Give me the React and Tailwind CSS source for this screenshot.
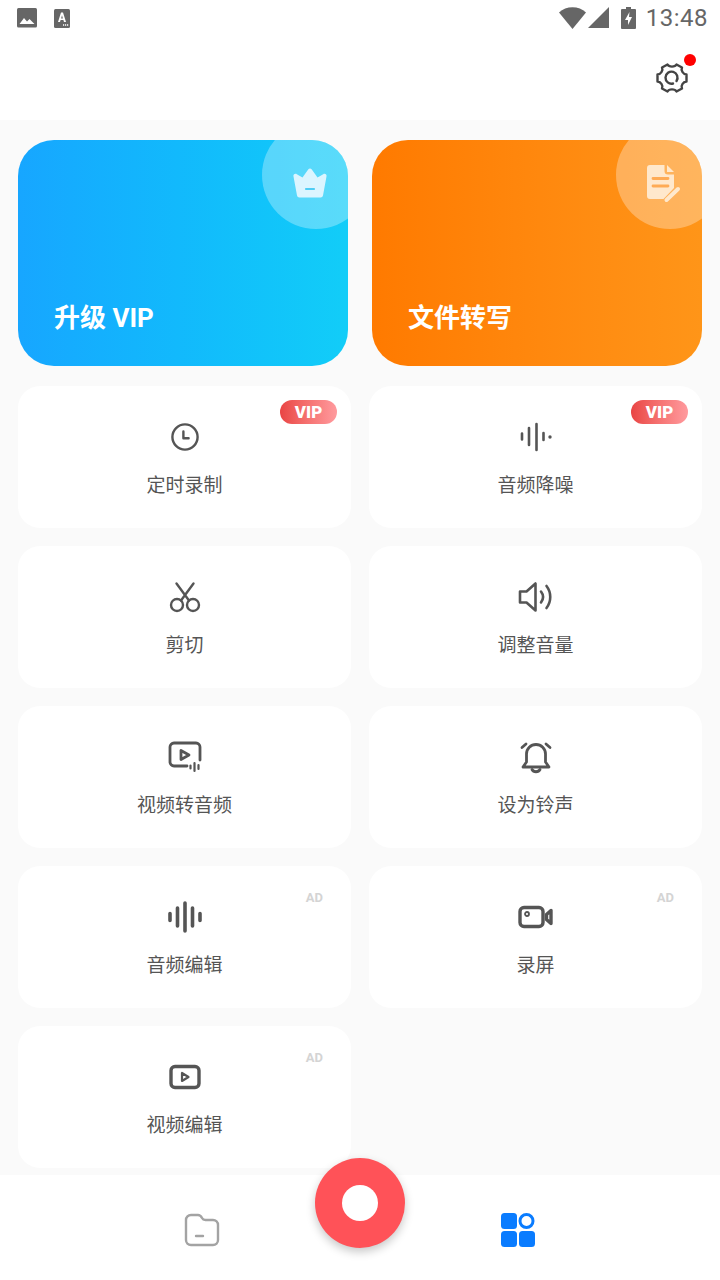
import React from 'react'

const ink = '#555555'

function Clock() {
  return (
    <svg width="30" height="30" viewBox="0 0 30 30" fill="none" stroke={ink} strokeWidth="2.4" strokeLinecap="round" strokeLinejoin="round">
      <circle cx="15" cy="15" r="12.6" />
      <path d="M13.4 9.5v6.8h5.2" />
    </svg>
  )
}

function Wave() {
  return (
    <svg width="34" height="30" viewBox="0 0 34 30" fill="none" stroke={ink} strokeLinecap="round">
      <path strokeWidth="2.6" d="M3 11.5v6M10 6v17M17.500 2v26M24.500 11v7" />
      <circle cx="31" cy="15" r="1.700" fill={ink} stroke="none" />
    </svg>
  )
}

function Scissors() {
  return (
    <svg width="32" height="32" viewBox="0 0 32 32" fill="none" stroke={ink} strokeWidth="2.4" strokeLinecap="round">
      <circle cx="8" cy="24" r="6" />
      <circle cx="24" cy="24" r="6" />
      <path d="M12 19.500 24.500 2.500M20 19.500 7.500 2.500" />
    </svg>
  )
}

function Speaker() {
  return (
    <svg width="36" height="32" viewBox="0 0 36 32" fill="none" stroke={ink} strokeWidth="2.6" strokeLinecap="round" strokeLinejoin="round">
      <path d="M2 10.500h6.500L17.500 2.500v27l-9-8H2z" />
      <path d="M23 10.500c2.500 3.300 2.500 7.700 0 11" />
      <path d="M28.500 5c5 6.500 5 15.500 0 22" />
    </svg>
  )
}

function VideoToAudio() {
  return (
    <svg width="34" height="32" viewBox="0 0 34 32" fill="none" stroke={ink} strokeWidth="2.800" strokeLinecap="round" strokeLinejoin="round">
      <path d="M19 25H6a4 4 0 0 1-4-4V6a4 4 0 0 1 4-4h22a4 4 0 0 1 4 4v13" />
      <path d="M13 9.500v9l8-4.500z" />
      <path strokeWidth="2.200" d="M22.500 24.500v3M26.500 22v8M30.500 24v4" />
    </svg>
  )
}

function Bell() {
  return (
    <svg width="34" height="34" viewBox="0 0 34 34" fill="none" stroke={ink} strokeWidth="2.800" strokeLinecap="round" strokeLinejoin="round">
      <path d="M4 27h26l-3.500-5V14a9.500 9.500 0 0 0-19 0v8z" />
      <path d="M13 29.500c1.500 3 6.500 3 8 0" />
      <path d="M3 7.500 7 4M31 7.500 27 4" />
    </svg>
  )
}

function AudioEdit() {
  return (
    <svg width="36" height="32" viewBox="0 0 36 32" fill="none" stroke={ink} strokeWidth="3.600" strokeLinecap="round">
      <path d="M3 12.500v7M10.500 7v18M18 2v28M25.500 7v18M33 12.500v7" />
    </svg>
  )
}

function ScreenRec() {
  return (
    <svg width="36" height="24" viewBox="0 0 36 24" fill="none" stroke={ink} strokeWidth="3.400" strokeLinecap="round" strokeLinejoin="round">
      <rect x="2" y="2.500" width="23" height="19" rx="4" />
      <circle cx="9" cy="9" r="2" strokeWidth="1.800" />
      <path d="M28.500 9.500 33 5.500v13l-4.500-4z" />
    </svg>
  )
}

function VideoEdit() {
  return (
    <svg width="32" height="26" viewBox="0 0 32 26" fill="none" stroke={ink} strokeWidth="3.400" strokeLinecap="round" strokeLinejoin="round">
      <rect x="2" y="2.500" width="28" height="21" rx="4" />
      <path strokeWidth="2.200" d="M13 9v8l6.500-4z" />
    </svg>
  )
}

function VipTag() {
  return (
    <div className="absolute right-[14px] top-[14px] flex h-6 w-[57px] items-center justify-center rounded-full bg-gradient-to-r from-[#e94444] to-[#ff9a9e] text-[17px] font-black leading-none text-white">
      VIP
    </div>
  )
}

function Tile({ icon, label, tag }) {
  return (
    <div className="relative flex h-[142px] flex-col items-center rounded-[22px] bg-white">
      {tag === 'vip' && <VipTag />}
      {tag === 'ad' && <div className="absolute right-[28px] top-[24px] text-[13px] font-bold leading-4 text-[#d4d4d4]">AD</div>}
      <div className="mt-[32px] flex h-[38px] items-center justify-center">{icon}</div>
      <div className="mt-[16px] text-[19px] leading-[28px] text-[#555555]">{label}</div>
    </div>
  )
}

function Promo({ title, className, icon, tx, ty }) {
  return (
    <div className={`relative h-[226px] w-[330px] overflow-hidden rounded-[36px] ${className}`}>
      <div className="absolute left-[244px] top-[-19px] flex h-[108px] w-[108px] items-center justify-center rounded-full bg-white/30" />
      <div className="absolute" style={{ left: tx, top: ty }}>{icon}</div>
      <div className="absolute left-[36px] top-[160px] text-[26px] font-bold leading-9 text-white">{title}</div>
    </div>
  )
}

export default function App() {
  return (
    <div className="relative flex h-[1280px] w-[720px] flex-col overflow-hidden bg-[#fafafa] font-['Roboto','Noto_Sans_CJK_SC',sans-serif]">
      <div className="h-[120px] bg-white">
        <div className="flex h-9 items-center justify-between pl-[17px] pr-[12px]">
          <div className="flex items-center gap-[17px]">
            <svg width="20" height="20" viewBox="0 0 20 20">
              <rect width="20" height="19.500" y="0" rx="1.500" fill="#666" />
              <path d="M2.500 16 7 10l3 3.500 2.500-2.500 5 5z" fill="#fff" />
            </svg>
            <svg width="16" height="19" viewBox="0 0 16 19">
              <rect width="16" height="19" rx="1.500" fill="#666" />
              <path d="M4 13 7 3.500h2L12 13h-2l-.6-2H6.600L6 13zM7.100 9.400h1.800L8 6.200z" fill="#fff" />
              <path d="M9 16h1.200M11 16h1.200M13 16h1.200" stroke="#fff" strokeWidth="1.400" />
            </svg>
          </div>
          <div className="flex items-center">
            <svg width="27" height="22" viewBox="0 0 27 22" className="mr-[1px]">
              <path d="M0 5.500C7-1.500 20-1.500 27 5.500L13.500 22z" fill="#666" />
            </svg>
            <svg width="22" height="22" viewBox="0 0 22 22" className="ml-[1px]">
              <path d="M0 21 21 0v21z" fill="#666" />
            </svg>
            <svg width="15" height="22" viewBox="0 0 15 22" className="ml-[11px]">
              <path d="M5 0h5v2h4a1 1 0 0 1 1 1v18a1 1 0 0 1-1 1H1a1 1 0 0 1-1-1V3a1 1 0 0 1 1-1h4z" fill="#666" />
              <path d="M8.500 5 4 13h3v5l4-8H8z" fill="#fff" />
            </svg>
            <div className="ml-[10px] text-[24px] font-normal leading-none tracking-[0.5px] text-[#666666]">13:48</div>
          </div>
        </div>
        <div className="flex justify-end pr-[32px] pt-[25px]">
          <div className="relative">
            <svg width="32" height="34" viewBox="0 0 32 34" fill="none" stroke="#444" strokeWidth="2.400" strokeLinecap="round" strokeLinejoin="round">
              <path d="M11.500 3.500c1.500 2.800 7.500 2.800 9 0l5.500 3c-1.500 3 1.500 7 4.500 7v7c-3 0-6 4-4.500 7l-5.500 3c-1.500-2.800-7.500-2.800-9 0l-5.500-3c1.500-3-1.500-7-4.500-7v-7c3 0 6-4 4.500-7z" />
              <path d="M20.500 20a6 6 0 1 0-3.500 2.500" />
            </svg>
            <div className="absolute right-[-8px] top-[-7px] h-3 w-3 rounded-full bg-[#ff0000]" />
          </div>
        </div>
      </div>

      <div className="flex-1 px-[18px] pt-[20px]">
        <div className="flex justify-between">
          <Promo
            title="升级 VIP"
            className="bg-gradient-to-r from-[#17a6ff] to-[#12cdf8]"
            tx={274}
            ty={28}
            icon={
              <svg width="36" height="32" viewBox="0 0 36 32">
                <path d="M1.500 8.500C1 6.500 3 5.200 4.800 6.200L10.500 9.500l5.700-8c.9-1.200 2.700-1.200 3.600 0l5.700 8 5.700-3.300c1.800-1 3.800.3 3.300 2.300L31 27.500c-.3 1.200-1.200 2-2.400 2H7.400c-1.200 0-2.100-.8-2.400-2z" fill="#dcf5ff" />
                <path d="M14 21h8" stroke="#4fcdf5" strokeWidth="2.200" strokeLinecap="round" />
              </svg>
            }
          />
          <Promo
            title="文件转写"
            className="bg-gradient-to-r from-[#ff7a00] to-[#ff9518]"
            tx={275}
            ty={25}
            icon={
              <svg width="34" height="38" viewBox="0 0 34 38">
                <path d="M0 3a3 3 0 0 1 3-3h14.500v6a3.500 3.500 0 0 0 3.500 3.500h6v13.500L16.500 34H3a3 3 0 0 1-3-3z" fill="#ffe8cc" />
                <path d="M20 0l7 7h-7z" fill="#ffe8cc" />
                <path d="M6 13.500h15M6 21h15" stroke="#ffab55" strokeWidth="2.800" strokeLinecap="round" />
                <path d="M19.500 35 31 24" stroke="#ffe8cc" strokeWidth="4" strokeLinecap="round" />
              </svg>
            }
          />
        </div>

        <div className="mt-[20px] grid grid-cols-2 gap-[18px]">
          <Tile icon={<Clock />} label="定时录制" tag="vip" />
          <Tile icon={<Wave />} label="音频降噪" tag="vip" />
          <Tile icon={<Scissors />} label="剪切" />
          <Tile icon={<Speaker />} label="调整音量" />
          <Tile icon={<VideoToAudio />} label="视频转音频" />
          <Tile icon={<Bell />} label="设为铃声" />
          <Tile icon={<AudioEdit />} label="音频编辑" tag="ad" />
          <Tile icon={<ScreenRec />} label="录屏" tag="ad" />
          <Tile icon={<VideoEdit />} label="视频编辑" tag="ad" />
        </div>
      </div>

      <div className="flex h-[105px] items-center bg-white pt-[5px]">
        <div className="flex w-[405px] justify-end">
          <svg width="36" height="34" viewBox="0 0 36 34" fill="none" stroke="#a3a3a3" strokeWidth="2.400" strokeLinecap="round" strokeLinejoin="round" className="mr-[185px]">
            <path d="M2 7a5 5 0 0 1 5-5h7c2 0 3 1 4 3s1.500 2 3.500 2H29a5 5 0 0 1 5 5v15a5 5 0 0 1-5 5H7a5 5 0 0 1-5-5z" />
            <path d="M12 23h7" />
          </svg>
        </div>
        <svg width="34" height="34" viewBox="0 0 34 34" className="ml-[96px]">
          <rect x="0" y="0" width="16" height="16" rx="3.500" fill="#0a7cff" />
          <circle cx="25.500" cy="8" r="6.500" fill="none" stroke="#0a7cff" strokeWidth="3" />
          <rect x="0" y="18" width="16" height="16" rx="3.500" fill="#0a7cff" />
          <rect x="18" y="18" width="16" height="16" rx="3.500" fill="#0a7cff" />
        </svg>
      </div>

      <div className="absolute left-[315px] top-[1158px] flex h-[90px] w-[90px] items-center justify-center rounded-full bg-[#ff5258] shadow-[0_4px_10px_rgba(0,0,0,0.22)]">
        <div className="h-9 w-9 rounded-full bg-white" />
      </div>
    </div>
  )
}
